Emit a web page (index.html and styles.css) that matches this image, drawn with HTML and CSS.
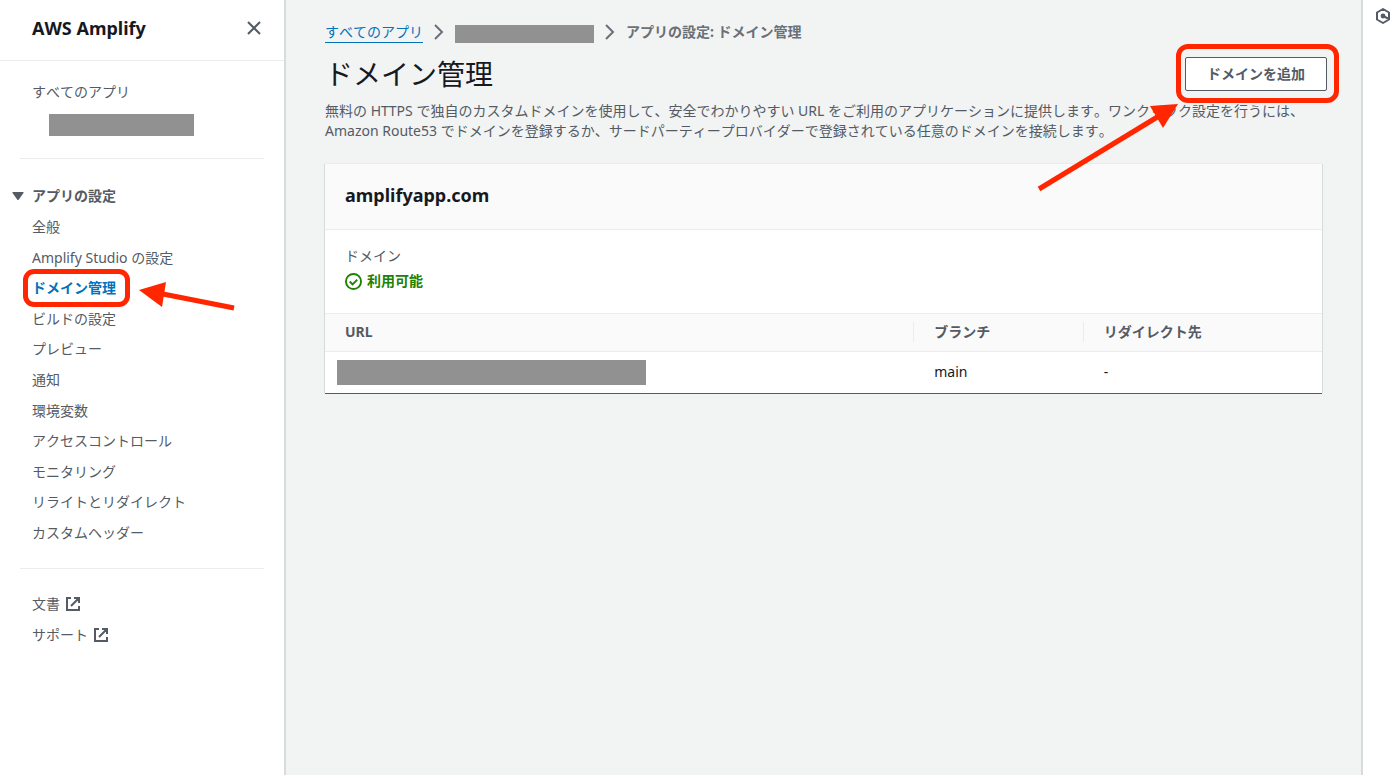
FILE: index.html
```html
<!DOCTYPE html>
<html lang="ja">
<head>
    <meta charset="UTF-8">
    <meta name="viewport" content="width=device-width, initial-scale=1.0">
    <title>AWS Amplify</title>
    <link rel="stylesheet" href="styles.css">
</head>
<body>
    <div class="layout">
        <aside class="sidebar">
            <div class="sidebar-header">
                <h2 class="sidebar-title">AWS Amplify</h2>
                <button type="button" class="icon-button" aria-label="閉じる">
                    <svg width="16" height="16" viewBox="0 0 16 16"><path d="M2 2l12 12M14 2L2 14" fill="none" stroke="#545b64" stroke-width="2"/></svg>
                </button>
            </div>

            <nav class="nav">
                <div class="nav-top">
                    <a href="#" class="nav-link">すべてのアプリ</a>
                    <div class="mask mask-app"></div>
                </div>

                <div class="nav-section">
                    <h3 class="nav-heading">
                        <svg width="12" height="8" viewBox="0 0 12 8"><path d="M1 0h10q1 0 .5 1L6.8 7.4q-.8 1-1.6 0L.5 1Q0 0 1 0z" fill="#545b64"/></svg>
                        アプリの設定
                    </h3>
                    <ul class="nav-list">
                        <li><a href="#" class="nav-link">全般</a></li>
                        <li><a href="#" class="nav-link">Amplify Studio の設定</a></li>
                        <li class="marked">
                            <a href="#" class="nav-link active">ドメイン管理</a>
                            <svg class="nav-arrow" width="96" height="32" viewBox="0 0 96 32"><path d="M24 13L95 27" stroke="#ff2600" stroke-width="5"/><path d="M0 9L27 1L23 26z" fill="#ff2600"/></svg>
                        </li>
                        <li><a href="#" class="nav-link">ビルドの設定</a></li>
                        <li><a href="#" class="nav-link">プレビュー</a></li>
                        <li><a href="#" class="nav-link">通知</a></li>
                        <li><a href="#" class="nav-link">環境変数</a></li>
                        <li><a href="#" class="nav-link">アクセスコントロール</a></li>
                        <li><a href="#" class="nav-link">モニタリング</a></li>
                        <li><a href="#" class="nav-link">リライトとリダイレクト</a></li>
                        <li><a href="#" class="nav-link">カスタムヘッダー</a></li>
                    </ul>
                </div>

                <ul class="nav-list nav-external">
                    <li>
                        <a href="#" class="nav-link">文書
                            <svg width="16" height="16" viewBox="0 0 16 16"><path d="M6 2H2v12h12v-4M9 2h5v5M14 2L6 10" fill="none" stroke="#545b64" stroke-width="2"/></svg>
                        </a>
                    </li>
                    <li>
                        <a href="#" class="nav-link">サポート
                            <svg width="16" height="16" viewBox="0 0 16 16"><path d="M6 2H2v12h12v-4M9 2h5v5M14 2L6 10" fill="none" stroke="#545b64" stroke-width="2"/></svg>
                        </a>
                    </li>
                </ul>
            </nav>
        </aside>

        <main class="main">
            <div class="breadcrumb">
                <a href="#" class="breadcrumb-link">すべてのアプリ</a>
                <svg width="10" height="16" viewBox="0 0 10 16"><path d="M1 1l7 7-7 7" fill="none" stroke="#687078" stroke-width="2"/></svg>
                <div class="mask mask-crumb"></div>
                <svg width="10" height="16" viewBox="0 0 10 16"><path d="M1 1l7 7-7 7" fill="none" stroke="#687078" stroke-width="2"/></svg>
                <span class="breadcrumb-current">アプリの設定: ドメイン管理</span>
            </div>

            <div class="page-header">
                <h1 class="page-title">ドメイン管理</h1>
                <div class="marked-action">
                    <button type="button" class="button">ドメインを追加</button>
                    <svg class="action-arrow" width="142" height="90" viewBox="0 0 142 90"><path d="M2 87L122 14" stroke="#ff2600" stroke-width="5"/><path d="M141 2L113 4L126 26z" fill="#ff2600"/></svg>
                </div>
            </div>
            <p class="description">無料の HTTPS で独自のカスタムドメインを使用して、安全でわかりやすい URL をご利用のアプリケーションに提供します。ワンクリック設定を行うには、<br>Amazon Route53 でドメインを登録するか、サードパーティープロバイダーで登録されている任意のドメインを接続します。</p>

            <section class="card">
                <h2 class="card-title">amplifyapp.com</h2>
                <div class="card-content">
                    <div class="label">ドメイン</div>
                    <div class="status">
                        <svg width="17" height="17" viewBox="0 0 18 18" fill="none" stroke="#1d8102" stroke-width="2"><circle cx="9" cy="9" r="8"/><path d="M5 9l3 3 5-5"/></svg>
                        利用可能
                    </div>
                </div>
                <table class="table">
                    <thead>
                        <tr>
                            <th class="col-url"><div class="cell">URL</div></th>
                            <th class="col-branch"><div class="cell">ブランチ</div></th>
                            <th><div class="cell">リダイレクト先</div></th>
                        </tr>
                    </thead>
                    <tbody>
                        <tr>
                            <td class="cell-url"><div class="mask mask-url"></div></td>
                            <td>main</td>
                            <td>-</td>
                        </tr>
                    </tbody>
                </table>
            </section>
        </main>

        <aside class="rail">
            <button type="button" class="icon-button" aria-label="情報">
                <svg width="16" height="18" viewBox="0 0 16 18"><path d="M8 2l6 3.500v7L8 16l-6-3.500v-7z" fill="none" stroke="#545b64" stroke-width="2" stroke-linejoin="round"/><circle cx="8" cy="9" r="2.400" fill="#545b64"/><path d="M8 9l5 2.500" stroke="#545b64" stroke-width="2"/></svg>
            </button>
        </aside>
    </div>
</body>
</html>
```

FILE: styles.css
```css
*,
*::before {
    margin: 0;
    padding: 0;
    box-sizing: border-box;
}

body {
    font-family: "Noto Sans", "Noto Sans CJK JP", sans-serif;
    font-size: 14px;
    font-kerning: none;
    line-height: 20px;
    color: #16191f;
    background-color: #f2f3f3;
}

svg {
    display: block;
    flex: none;
}

ul {
    list-style: none;
}

.layout {
    display: flex;
    min-height: 100vh;
}

.icon-button {
    border: none;
    background: none;
    cursor: pointer;
}

.mask {
    background-color: #919191;
}

/* sidebar */
.sidebar {
    flex: none;
    width: 286px;
    background-color: #fff;
    border-right: 2px solid #d9dcdc;
}

.sidebar-header {
    display: flex;
    align-items: center;
    justify-content: space-between;
    height: 61px;
    padding: 0 22px 5px 32px;
    border-bottom: 1px solid #eaeded;
}

.sidebar-title {
    font-size: 18px;
    line-height: 24px;
}

.nav {
    padding: 21px 20px;
}

.nav-top {
    padding: 0 12px 22px;
    border-bottom: 1px solid #eaeded;
}

.mask-app {
    width: 145px;
    height: 22px;
    margin: 12px 0 0 17px;
}

.nav-section {
    padding: 27px 12px 20px;
    border-bottom: 1px solid #eaeded;
}

.nav-heading {
    display: flex;
    align-items: center;
    gap: 8px;
    margin-left: -20px;
    font-size: 14px;
    color: #545b64;
}

.nav-list {
    display: grid;
    grid-auto-rows: 1fr;
    align-items: center;
}

.nav-section .nav-list {
    height: 336px;
    margin-top: 6px;
}

.nav-external {
    height: 61px;
    margin: 20px 12px 0;
}

.nav-link {
    display: inline-flex;
    align-items: center;
    gap: 5px;
    color: #545b64;
    text-decoration: none;
    white-space: nowrap;
    vertical-align: top;
}

.nav-link.active {
    color: #0073bb;
    font-weight: 700;
}

/* red marks */
.marked,
.marked-action {
    position: relative;
}

.marked::before,
.marked-action::before {
    content: "";
    position: absolute;
    border: 5px solid #ff2600;
    pointer-events: none;
}

.marked::before {
    top: -9px;
    left: -9px;
    width: 107px;
    height: 38px;
    border-radius: 11px;
}

.marked-action::before {
    inset: -13px -12px -12px -9px;
    border-radius: 12px;
}

.nav-arrow {
    position: absolute;
    top: 3px;
    left: 107px;
}

.action-arrow {
    position: absolute;
    top: 45px;
    right: 148px;
}

/* content */
.main {
    flex: 1;
    min-width: 0;
    padding: 22px 39px 39px;
}

.breadcrumb {
    display: flex;
    align-items: center;
    gap: 11px;
    height: 20px;
    color: #687078;
}

.breadcrumb-link {
    color: #0073bb;
    text-decoration: none;
    border-bottom: 1px solid #0073bb;
}

.breadcrumb-current {
    font-weight: 700;
}

.mask-crumb {
    width: 139px;
    height: 18px;
    margin-top: 4px;
}

.page-header {
    display: flex;
    align-items: center;
    justify-content: space-between;
    margin: 12px -5px 7px 0;
}

.page-title {
    font-size: 28px;
    font-weight: 400;
    line-height: 40px;
}

.button {
    display: block;
    height: 34px;
    padding: 0 21px;
    border: 1px solid #545b64;
    border-radius: 2px;
    background-color: #fff;
    color: #545b64;
    font: inherit;
    font-weight: 700;
    cursor: pointer;
}

.description {
    color: #545b64;
}

.card {
    margin-top: 23px;
    background-color: #fff;
    box-shadow: 0 1px 0 #545b64, 1px 0 0 #d5dbdb, -1px 0 0 #d5dbdb, 0 -1px 0 #eaeded;
}

.card-title {
    padding: 19px 20px 22px;
    font-size: 18px;
    line-height: 24px;
    background-color: #fafafa;
    border-bottom: 1px solid #eaeded;
}

.card-content {
    padding: 16px 20px 22px;
}

.label {
    color: #545b64;
}

.status {
    display: flex;
    align-items: center;
    gap: 5px;
    margin-top: 5px;
    color: #1d8102;
    font-weight: 700;
}

.table {
    width: 100%;
    table-layout: fixed;
    border-collapse: collapse;
}

.table th {
    padding: 8px 0 9px;
    text-align: left;
    color: #545b64;
    background-color: #fafafa;
    border-top: 1px solid #eaeded;
    border-bottom: 1px solid #eaeded;
}

.table .cell {
    padding-left: 20px;
}

.table th + th .cell {
    border-left: 1px solid #eaeded;
}

.table td {
    height: 41px;
    padding-left: 21px;
}

.table .cell-url {
    padding-left: 12px;
}

.col-url {
    width: 59%;
}

.col-branch {
    width: 17%;
}

.mask-url {
    width: 309px;
    max-width: 100%;
    height: 25px;
}

/* right rail */
.rail {
    flex: none;
    width: 39px;
    padding: 7px 0 0 12px;
    background-color: #fff;
    border-left: 2px solid #d9dcdc;
}
```
